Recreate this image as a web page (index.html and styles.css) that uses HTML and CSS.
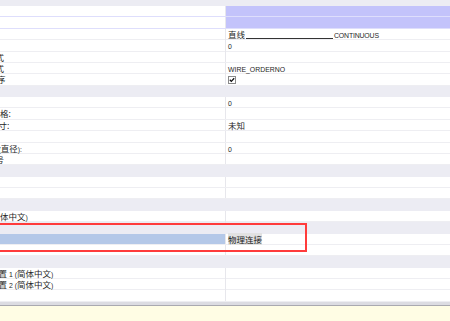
FILE: index.html
```html
<!DOCTYPE html>
<html>
<head>
<meta charset="utf-8">
<link rel="stylesheet" href="styles.css">
</head>
<body>
<div class="page">
  <div class="grid">
    <div class="row cat"></div>
    <div class="row lav"><div class="name"></div><div class="val"></div></div>
    <div class="row lav"><div class="name"></div><div class="val"></div></div>
    <div class="row"><div class="name"></div><div class="val">直线<span class="ln"></span><span class="en cont">CONTINUOUS</span></div></div>
    <div class="row"><div class="name"></div><div class="val"><span class="en">0</span></div></div>
    <div class="row"><div class="name"><span class="o5">式</span></div><div class="val"></div></div>
    <div class="row"><div class="name"><span class="o5">式</span></div><div class="val"><span class="en">WIRE_ORDERNO</span></div></div>
    <div class="row"><div class="name"><span class="o3">序</span></div><div class="val"><svg class="chk" width="8" height="8" viewBox="0 0 8 8"><rect x="0.5" y="0.5" width="7" height="7" fill="#fff" stroke="#8a8a8a"/><path d="M1.8 3.8 L3.3 5.4 L6.2 2.2" fill="none" stroke="#111" stroke-width="1.3"/></svg></div></div>
    <div class="row cat"></div>
    <div class="row"><div class="name"></div><div class="val"><span class="en">0</span></div></div>
    <div class="row"><div class="name"><span class="o0">格:</span></div><div class="val"></div></div>
    <div class="row"><div class="name"><span class="o1">寸:</span></div><div class="val">未知</div></div>
    <div class="row"><div class="name"></div><div class="val"></div></div>
    <div class="row"><div class="name"><span class="o2"><span class="en">(</span>直径<span class="en">):</span></span></div><div class="val"><span class="en">0</span></div></div>
    <div class="row"><div class="name"><span class="o5">号</span></div><div class="val"></div></div>
    <div class="row cat"></div>
    <div class="row"><div class="name"></div><div class="val"></div></div>
    <div class="row"><div class="name"></div><div class="val"></div></div>
    <div class="row cat"></div>
    <div class="row"><div class="name"><span class="o0">体中文<span class="en">)</span></span></div><div class="val"></div></div>
    <div class="row cat"></div>
    <div class="row sel"><div class="name"></div><div class="val"><span class="hl">物理连接</span></div></div>
    <div class="row"><div class="name"></div><div class="val"></div></div>
    <div class="row cat"></div>
    <div class="row"><div class="name"><span class="o1">置 <span class="en">1 (</span>简体中文<span class="en">)</span></span></div><div class="val"></div></div>
    <div class="row"><div class="name"><span class="o1">置 <span class="en">2 (</span>简体中文<span class="en">)</span></span></div><div class="val"></div></div>
    <div class="row"><div class="name"></div><div class="val"></div></div>
  </div>
  <div class="split"></div>
  <div class="desc"></div>
  <div class="mark"></div>
</div>
</body>
</html>
```
FILE: styles.css
```css
html, body {
  margin: 0;
  padding: 0;
  background: #fff;
}
body {
  width: 450px;
  height: 321px;
  overflow: hidden;
  font-family: "Noto Sans CJK SC", "Liberation Sans", sans-serif;
  font-size: 8.5px;
  color: #262626;
}
.page {
  position: relative;
  display: flex;
  flex-direction: column;
  height: 321px;
  overflow: hidden;
}
.grid {
  margin-top: -5.385px;
}
.row {
  display: grid;
  grid-template-columns: 226px 1fr;
  height: 11.385px;
  box-sizing: border-box;
  border-bottom: 1px solid #eeeef2;
}
.name, .val {
  line-height: 10.385px;
  white-space: nowrap;
}
.name {
  border-right: 1px solid #e7e7ec;
}
.val {
  padding-left: 2px;
}
.cat {
  background: #ececf3;
  border-bottom-color: #ececf3;
}
.lav .val {
  background: #c3c3fb;
}
.lav {
  border-bottom-color: #dedefc;
}
.sel .name {
  background: #b4c8e8;
}
.en {
  font-family: "Liberation Sans", sans-serif;
  font-size: 6.9px;
}
.cont {
  letter-spacing: -0.15px;
}
.ln {
  display: inline-block;
  width: 87px;
  height: 0;
  border-bottom: 1px solid #333;
  vertical-align: -1px;
  margin-left: 1px;
  margin-right: 1px;
}
.chk {
  display: block;
  margin-top: 1.5px;
}
.hl {
  background: #e2e2e2;
  color: #1a1a1a;
}
.o0, .o1, .o2, .o3, .o5 {
  display: inline-block;
}
.o0 { margin-left: 0; }
.o1 { margin-left: -1.5px; }
.o2 { margin-left: -1.5px; }
.o3 { margin-left: -3px; }
.o5 { margin-left: -4.5px; }
.split {
  height: 3px;
  background: #dcdce2;
  border-bottom: 1px solid #a9a9b0;
}
.desc {
  flex: 1;
  background: #fffde4;
}
.mark {
  position: absolute;
  left: -4px;
  top: 223px;
  width: 311px;
  height: 29px;
  box-sizing: border-box;
  border: 2px solid #ff3b3b;
}
```
